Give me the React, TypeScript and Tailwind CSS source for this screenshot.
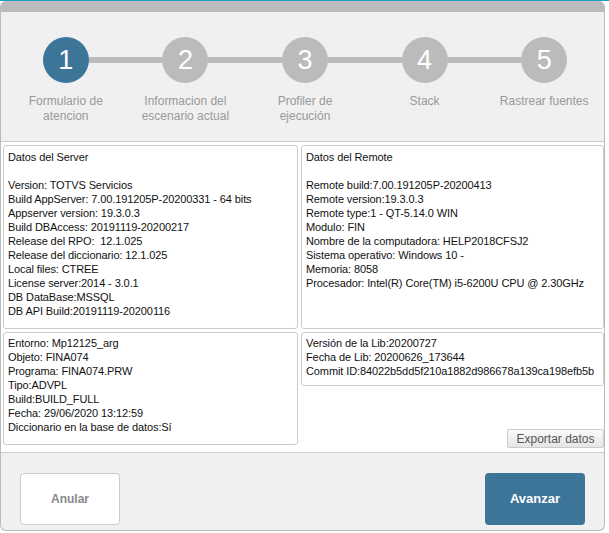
import React from "react";

const steps = [
  { n: 1, label: "Formulario de atencion" },
  { n: 2, label: "Informacion del escenario actual" },
  { n: 3, label: "Profiler de ejecución" },
  { n: 4, label: "Stack" },
  { n: 5, label: "Rastrear fuentes" },
];

const serverLines = [
  "Version: TOTVS Servicios",
  "Build AppServer: 7.00.191205P-20200331 - 64 bits",
  "Appserver version: 19.3.0.3",
  "Build DBAccess: 20191119-20200217",
  "Release del RPO:  12.1.025",
  "Release del diccionario: 12.1.025",
  "Local files: CTREE",
  "License server:2014 - 3.0.1",
  "DB DataBase:MSSQL",
  "DB API Build:20191119-20200116",
];

const remoteLines = [
  "Remote build:7.00.191205P-20200413",
  "Remote version:19.3.0.3",
  "Remote type:1 - QT-5.14.0 WIN",
  "Modulo: FIN",
  "Nombre de la computadora: HELP2018CFSJ2",
  "Sistema operativo: Windows 10 -",
  "Memoria: 8058",
  "Procesador: Intel(R) Core(TM) i5-6200U CPU @ 2.30GHz",
];

const envLines = [
  "Entorno: Mp12125_arg",
  "Objeto: FINA074",
  "Programa: FINA074.PRW",
  "Tipo:ADVPL",
  "Build:BUILD_FULL",
  "Fecha: 29/06/2020 13:12:59",
  "Diccionario en la base de datos:Sí",
];

const libLines = [
  "Versión de la Lib:20200727",
  "Fecha de Lib: 20200626_173644",
  "Commit ID:84022b5dd5f210a1882d986678a139ca198efb5b",
];

const Lines = ({ lines }: { lines: string[] }) => (
  <>
    {lines.map((l) => (
      <div key={l} className="whitespace-pre">{l}</div>
    ))}
  </>
);

export default function App() {
  return (
    <div
      className="w-[609px] h-[533px] bg-white border-t border-[#1aa0c8] overflow-hidden"
      style={{ fontFamily: '"Liberation Sans", Arial, sans-serif' }}
    >
      <div className="w-[605px] h-[530px] flex flex-col rounded-[6px] border-x border-b border-[#bbbbbb] overflow-hidden bg-[#f0f0f0]">
        {/* Header strip */}
        <div className="h-[11px] bg-[#bbbbbb] shrink-0" />

        {/* Stepper */}
        <div className="h-[129px] shrink-0 pt-[25px] pl-[5px] flex">
          {steps.map((s, i) => (
            <div key={s.n} className="w-[120px] flex flex-col items-center">
              <div className="w-full flex items-center">
                <div className={`flex-1 h-[6px] ${i === 0 ? "" : "bg-[#bbbbbb]"}`} />
                <div
                  className={`w-[46px] h-[46px] rounded-full flex items-center justify-center text-white text-[27px] leading-none ${
                    i === 0 ? "bg-[#3d7599]" : "bg-[#bbbbbb]"
                  }`}
                >
                  {s.n}
                </div>
                <div className={`flex-1 h-[6px] ${i === steps.length - 1 ? "" : "bg-[#bbbbbb]"}`} />
              </div>
              <div className="mt-[11px] w-[100px] text-center text-[12px] leading-[15px] text-[#999999]">
                {s.label}
              </div>
            </div>
          ))}
        </div>

        {/* Content */}
        <div className="h-[312px] shrink-0 bg-white border-y border-[#cccccc] pt-[3px] pl-[2px] text-[11px] tracking-[-0.1px] leading-[14px] text-[#111111]">
          <div className="grid grid-cols-[295px_303px] gap-x-[3px] gap-y-[3px]">
            <div className="h-[184px] border border-[#cccccc] rounded-[3px] pt-[4px] pl-[4px]">
              <div>Datos del Server</div>
              <div className="h-[14px]" />
              <Lines lines={serverLines} />
            </div>
            <div className="h-[184px] border border-[#cccccc] rounded-[3px] pt-[4px] pl-[4px]">
              <div>Datos del Remote</div>
              <div className="h-[14px]" />
              <Lines lines={remoteLines} />
            </div>
            <div className="h-[113px] border border-[#cccccc] rounded-[3px] pt-[3px] pl-[4px]">
              <Lines lines={envLines} />
            </div>
            <div className="h-[116px] flex flex-col justify-between">
              <div className="h-[54px] border border-[#cccccc] rounded-[3px] pt-[3px] pl-[4px]">
                <Lines lines={libLines} />
              </div>
              <div className="flex justify-end">
                <button className="w-[97px] h-[19px] rounded-[2px] border border-[#cccccc] bg-gradient-to-b from-[#fafafa] to-[#e6e6e6] text-[12px] tracking-normal leading-none text-[#555555]">
                  Exportar datos
                </button>
              </div>
            </div>
          </div>
        </div>

        {/* Footer */}
        <div className="flex-1 flex items-start justify-between pt-[20px] px-[19px]">
          <button className="w-[100px] h-[52px] rounded-[4px] border border-[#cccccc] bg-white text-[12px] font-bold text-[#888888]">
            Anular
          </button>
          <button className="w-[100px] h-[52px] rounded-[4px] bg-[#3d7599] text-[13px] font-bold text-white">
            Avanzar
          </button>
        </div>
      </div>
    </div>
  );
}
